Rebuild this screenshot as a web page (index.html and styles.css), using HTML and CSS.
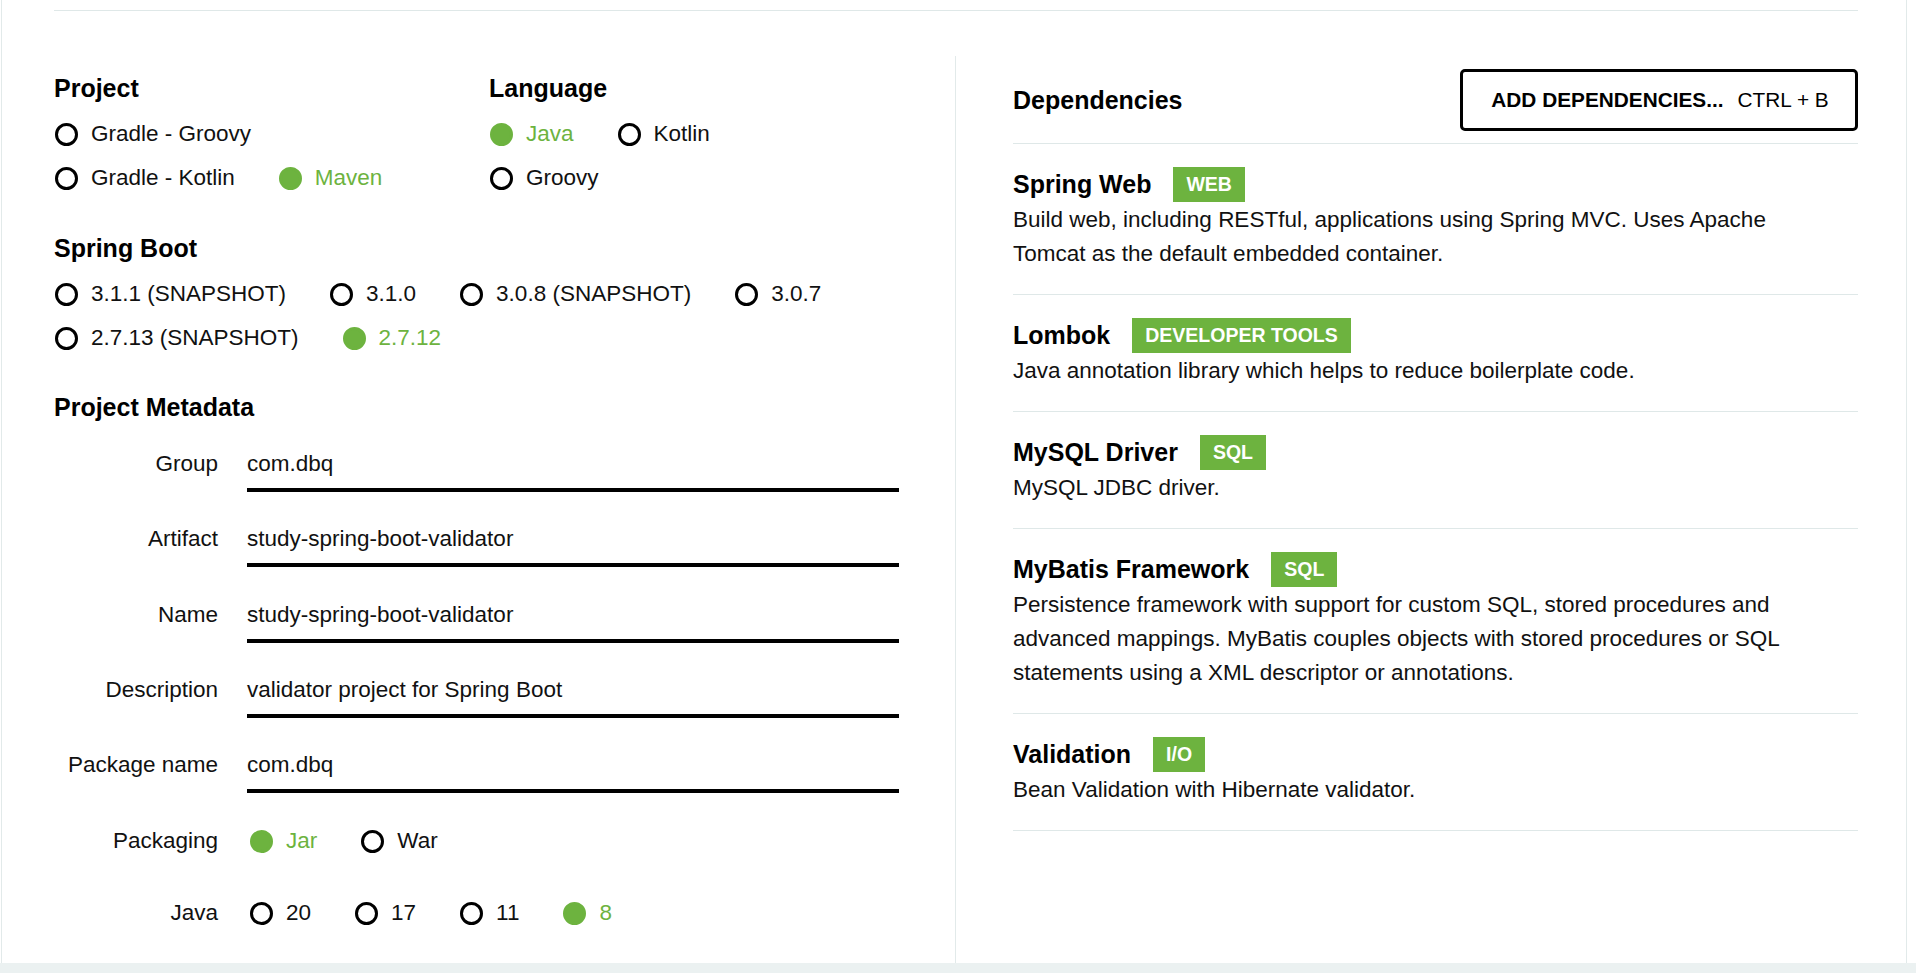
FILE: index.html
```html
<!DOCTYPE html>
<html lang="en">
<head>
<meta charset="utf-8">
<title>Spring Initializr</title>
<link rel="stylesheet" href="styles.css">
</head>
<body>
<div class="page">
  <div class="container">
    <div class="topline"></div>
    <div class="cols">
      <div class="left">
        <div class="row-top">
          <section class="group project">
            <h2 class="heading">Project</h2>
            <div class="options">
              <span class="radio"><span class="dot"></span>Gradle - Groovy</span>
              <span class="radio"><span class="dot"></span>Gradle - Kotlin</span>
              <span class="radio on"><span class="dot"></span>Maven</span>
            </div>
          </section>
          <section class="group language">
            <h2 class="heading">Language</h2>
            <div class="options">
              <span class="radio on"><span class="dot"></span>Java</span>
              <span class="radio"><span class="dot"></span>Kotlin</span>
              <span class="radio"><span class="dot"></span>Groovy</span>
            </div>
          </section>
        </div>
        <section class="group boot">
          <h2 class="heading">Spring Boot</h2>
          <div class="options">
            <span class="radio"><span class="dot"></span>3.1.1 (SNAPSHOT)</span>
            <span class="radio"><span class="dot"></span>3.1.0</span>
            <span class="radio"><span class="dot"></span>3.0.8 (SNAPSHOT)</span>
            <span class="radio"><span class="dot"></span>3.0.7</span>
            <span class="radio"><span class="dot"></span>2.7.13 (SNAPSHOT)</span>
            <span class="radio on"><span class="dot"></span>2.7.12</span>
          </div>
        </section>
        <section class="meta">
          <h2 class="heading">Project Metadata</h2>
          <div class="field"><span class="flabel">Group</span><span class="input">com.dbq</span></div>
          <div class="field"><span class="flabel">Artifact</span><span class="input">study-spring-boot-validator</span></div>
          <div class="field"><span class="flabel">Name</span><span class="input">study-spring-boot-validator</span></div>
          <div class="field"><span class="flabel">Description</span><span class="input">validator project for Spring Boot</span></div>
          <div class="field"><span class="flabel">Package name</span><span class="input">com.dbq</span></div>
          <div class="field-radio packaging">
            <span class="flabel">Packaging</span>
            <div class="options">
              <span class="radio on"><span class="dot"></span>Jar</span>
              <span class="radio"><span class="dot"></span>War</span>
            </div>
          </div>
          <div class="field-radio java">
            <span class="flabel">Java</span>
            <div class="options">
              <span class="radio"><span class="dot"></span>20</span>
              <span class="radio"><span class="dot"></span>17</span>
              <span class="radio"><span class="dot"></span>11</span>
              <span class="radio on"><span class="dot"></span>8</span>
            </div>
          </div>
        </section>
      </div>
      <div class="right">
        <div class="dep-head">
          <h2 class="heading">Dependencies</h2>
          <button class="add-btn" type="button"><strong>ADD DEPENDENCIES...</strong><span>CTRL + B</span></button>
        </div>
        <div class="dep">
          <div class="dep-title"><span class="dep-name">Spring Web</span><span class="badge">WEB</span></div>
          <p class="dep-desc">Build web, including RESTful, applications using Spring MVC. Uses Apache Tomcat as the default embedded container.</p>
        </div>
        <div class="dep">
          <div class="dep-title"><span class="dep-name">Lombok</span><span class="badge">DEVELOPER TOOLS</span></div>
          <p class="dep-desc">Java annotation library which helps to reduce boilerplate code.</p>
        </div>
        <div class="dep">
          <div class="dep-title"><span class="dep-name">MySQL Driver</span><span class="badge">SQL</span></div>
          <p class="dep-desc">MySQL JDBC driver.</p>
        </div>
        <div class="dep">
          <div class="dep-title"><span class="dep-name">MyBatis Framework</span><span class="badge">SQL</span></div>
          <p class="dep-desc">Persistence framework with support for custom SQL, stored procedures and advanced mappings. MyBatis couples objects with stored procedures or SQL statements using a XML descriptor or annotations.</p>
        </div>
        <div class="dep">
          <div class="dep-title"><span class="dep-name">Validation</span><span class="badge">I/O</span></div>
          <p class="dep-desc">Bean Validation with Hibernate validator.</p>
        </div>
      </div>
    </div>
  </div>
  <div class="band"></div>
</div>
</body>
</html>
```

FILE: styles.css
```css
* { box-sizing: border-box; }

html, body {
  margin: 0;
  padding: 0;
  background: #ffffff;
}

body {
  font-family: "Liberation Sans", Arial, sans-serif;
  color: #111;
  font-size: 22.5px;
}

.page {
  width: 1916px;
  height: 973px;
  display: flex;
  flex-direction: column;
  overflow: hidden;
}

.container {
  height: 963px;
  width: 1906px;
  margin-left: 1px;
  border-left: 1px solid #e2eaea;
  border-right: 1px solid #e2eaea;
  background: #fff;
}

.topline {
  margin: 10px 48px 0 52px;
  border-top: 1px solid #dfe8e8;
}

.cols {
  display: flex;
  margin-top: 45px;
  height: 907px;
}

.left {
  width: 954px;
  padding: 19px 56px 0 52px;
  border-right: 1px solid #e2eaea;
}

.right {
  flex: 1;
  padding: 13px 48px 0 57px;
}

.heading {
  margin: 0;
  font-size: 25px;
  line-height: 26px;
  font-weight: bold;
  color: #000;
}

.row-top {
  display: grid;
  grid-template-columns: 360px 360px;
  column-gap: 75px;
}

.options {
  display: flex;
  flex-wrap: wrap;
  column-gap: 43px;
}

.group .options {
  margin-top: 11px;
}

.boot {
  margin-top: 35px;
}

.radio {
  display: inline-flex;
  align-items: center;
  height: 44px;
  white-space: nowrap;
  color: #111;
}

.dot {
  width: 23px;
  height: 23px;
  border: 3px solid #000;
  border-radius: 50%;
  margin: 0 13px 0 1px;
  flex: none;
}

.radio.on { color: #6db33f; }
.radio.on .dot { background: #6db33f; border-color: #6db33f; }

.meta { margin-top: 34px; }

.meta .heading { margin-bottom: 23px; }

.field {
  display: flex;
  align-items: flex-start;
  margin-bottom: 26.25px;
}

.flabel {
  width: 164px;
  margin-right: 29px;
  text-align: right;
  flex: none;
  line-height: 26px;
  color: #111;
}

.field .flabel { padding-top: 8px; }

.input {
  flex: 1;
  display: block;
  padding: 8px 0 11px;
  line-height: 26px;
  border-bottom: 4px solid #000;
  color: #111;
}

.field-radio {
  display: flex;
  align-items: center;
}

.field-radio .options { margin-left: 2px; }

.java { margin-top: 28px; }

.dep-head {
  display: flex;
  align-items: center;
  justify-content: space-between;
  padding-bottom: 12px;
  border-bottom: 1px solid #dfe8e8;
}

.add-btn {
  width: 398px;
  height: 62px;
  border: 3px solid #000;
  border-radius: 5px;
  background: #fff;
  display: flex;
  align-items: center;
  justify-content: center;
  gap: 14px;
  font-family: "Liberation Sans", Arial, sans-serif;
  font-size: 20.8px;
  color: #000;
  padding: 0 0 0 2px;
}

.add-btn strong { font-weight: bold; }

.dep {
  padding: 22px 0 23px;
  border-bottom: 1px solid #dfe8e8;
}

.dep-title {
  display: flex;
  align-items: center;
  height: 37px;
  gap: 22px;
}

.dep-name {
  font-size: 25px;
  font-weight: bold;
  color: #000;
}

.badge {
  background: #6db33f;
  color: #fff;
  font-size: 19.5px;
  font-weight: bold;
  height: 35px;
  line-height: 35px;
  padding: 0 13px;
}

.dep-desc {
  margin: 0;
  max-width: 800px;
  line-height: 34px;
  color: #111;
}

.band {
  flex: 1;
  background: #ebf1f1;
}
```
